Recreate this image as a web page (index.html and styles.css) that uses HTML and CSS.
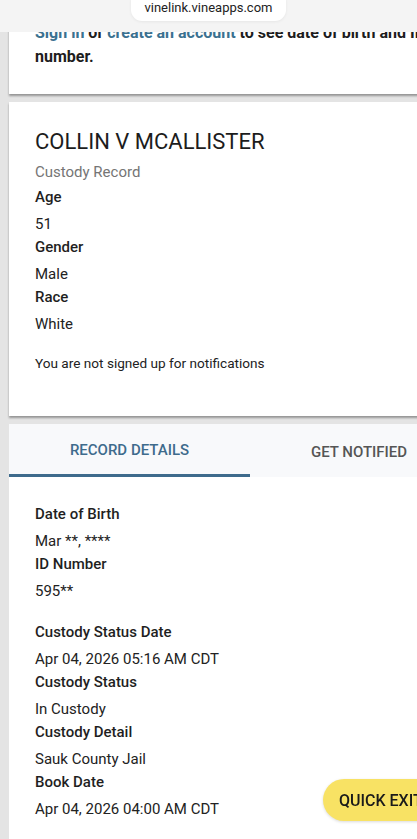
FILE: index.html
```html
<!DOCTYPE html>
<html lang="en">
  <head>
    <title>VINELink - Custody Record</title>
    <link rel="stylesheet" href="styles.css">
  </head>
  <body>
    <div class="top-bar">
      <div class="url-pill">vinelink.vineapps.com</div>
    </div>

    <div class="card card-notice">
      <p class="notice">
        <a href="#">Sign in</a> or <a href="#">create an account</a> to see date of birth and ID number.
      </p>
    </div>

    <div class="card card-person">
      <h1 class="name">COLLIN V MCALLISTER</h1>
      <div class="subtitle">Custody Record</div>
      <div class="label">Age</div>
      <div class="value">51</div>
      <div class="label">Gender</div>
      <div class="value">Male</div>
      <div class="label">Race</div>
      <div class="value">White</div>
      <p class="small-note">You are not signed up for notifications</p>
    </div>

    <div class="card card-details">
      <div class="tabs">
        <div class="tab tab-active">RECORD DETAILS</div>
        <div class="tab">GET NOTIFIED</div>
      </div>
      <div class="details">
        <div class="group">
          <div class="label">Date of Birth</div>
          <div class="value">Mar **, ****</div>
          <div class="label">ID Number</div>
          <div class="value">595**</div>
        </div>
        <div class="group">
          <div class="label">Custody Status Date</div>
          <div class="value">Apr 04, 2026 05:16 AM CDT</div>
          <div class="label">Custody Status</div>
          <div class="value">In Custody</div>
          <div class="label">Custody Detail</div>
          <div class="value">Sauk County Jail</div>
          <div class="label">Book Date</div>
          <div class="value">Apr 04, 2026 04:00 AM CDT</div>
        </div>
      </div>
    </div>

    <button type="button" class="quick-exit">QUICK EXIT</button>
  </body>
</html>
```

FILE: styles.css
```css
body {
  font-family: Roboto, "Liberation Sans", sans-serif;
  margin: 0;
  padding: 0 0 40px 0;
  background-color: #e4e4e4;
  color: #1f1f1f;
  overflow-x: hidden;
}

.top-bar {
  position: fixed;
  top: 0;
  left: 0;
  right: 0;
  height: 32px;
  background-color: #f4f4f4;
  z-index: 5;
}

.url-pill {
  position: absolute;
  left: 131px;
  top: -10px;
  width: 155px;
  height: 31px;
  padding-top: 10px;
  box-sizing: border-box;
  background-color: #fff;
  border-radius: 11px;
  box-shadow: 0 1px 3px rgba(0, 0, 0, 0.06);
  text-align: center;
  font-size: 13px;
  line-height: 16px;
  color: #222;
}

.card {
  margin-left: 9px;
  width: 500px;
  background-color: #fff;
  box-shadow: 0 2px 2px rgba(0, 0, 0, 0.35);
  box-sizing: border-box;
}

.card-notice {
  padding: 21px 26px 25px 26px;
}

.notice {
  margin: 0;
  font-size: 16px;
  line-height: 24px;
  font-weight: 700;
  color: #1d1d1d;
}

.notice a {
  color: #3b7190;
  text-decoration: none;
}

.card-person {
  margin-top: 8px;
  padding: 26px 26px 43px 26px;
}

.name {
  margin: 0;
  font-size: 22px;
  line-height: 28px;
  font-weight: 400;
  color: #1c1c1c;
}

.subtitle {
  margin-top: 4px;
  margin-bottom: 1px;
  font-size: 15px;
  line-height: 24px;
  color: #757575;
}

.label {
  font-size: 15px;
  line-height: 24px;
  font-weight: 500;
  color: #1f1f1f;
}

.value {
  margin-top: 4px;
  font-size: 15px;
  line-height: 22px;
  color: #222;
}

.small-note {
  margin: 18px 0 0 0;
  font-size: 13.6px;
  line-height: 20px;
  color: #222;
}

.card-details {
  margin-top: 8px;
  box-shadow: none;
}

.tabs {
  display: flex;
  height: 53px;
  background-color: #f8f9fb;
}

.tab {
  display: flex;
  align-items: center;
  justify-content: center;
  width: 218px;
  font-size: 15px;
  font-weight: 500;
  color: #555;
  box-sizing: border-box;
  padding-top: 2px;
}

.tab-active {
  width: 241px;
  color: #3e6b8c;
  border-bottom: 3px solid #3e6b8c;
}

.details {
  padding: 25px 26px 40px 26px;
}

.group + .group {
  margin-top: 18px;
}

.quick-exit {
  position: fixed;
  left: 323px;
  top: 779px;
  width: 130px;
  height: 42px;
  padding: 0 0 0 16px;
  border: none;
  border-radius: 21px;
  background-color: #f8e264;
  font-family: Roboto, "Liberation Sans", sans-serif;
  font-size: 16px;
  font-weight: 500;
  color: #1a1a1a;
  text-align: left;
  box-shadow: 0 1px 3px rgba(0, 0, 0, 0.15);
  cursor: pointer;
}
```
